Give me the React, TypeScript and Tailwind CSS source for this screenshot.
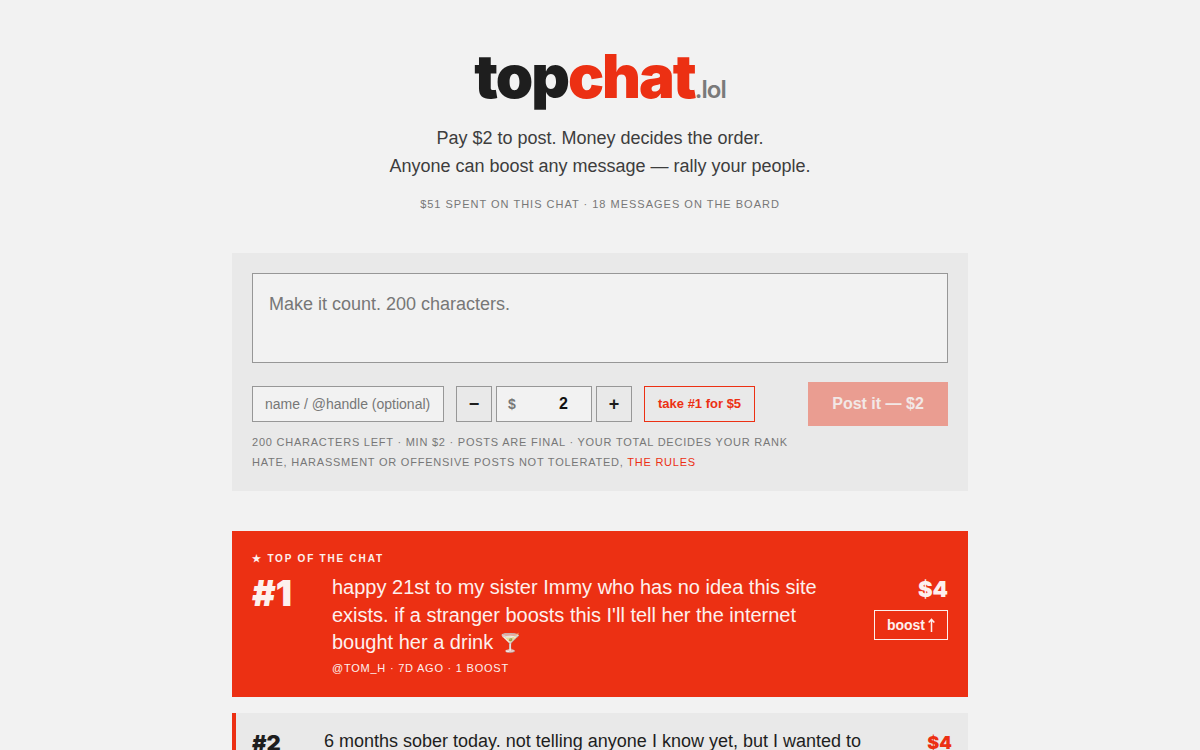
import React, { useState } from 'react';

type Message = {
  rank: number;
  text: string;
  amount: number;
};

const label = 'text-[11px] leading-5 uppercase';
const stepButton =
  'flex size-9 items-center justify-center border border-[#979797] text-lg font-bold text-[#1e1e1e]';

function Header() {
  return (
    <header className="flex flex-col items-center text-center">
      <h1 className="font-['Inter'] text-[60px] leading-[60px] font-black tracking-[-2px] text-[#1e1e1e]">
        top<span className="text-[#ec3013]">chat</span>
        <span className="text-2xl font-semibold tracking-[-1px] text-[#7a7a7a]">.lol</span>
      </h1>
      <p className="mt-[18px] text-lg leading-7 text-[#3d3d3d]">
        Pay $2 to post. Money decides the order.
        <br />
        Anyone can boost any message — rally your people.
      </p>
      <p className={`${label} mt-3.5 tracking-[1px] text-[#777777]`}>
        $51 spent on this chat · 18 messages on the board
      </p>
    </header>
  );
}

function Composer() {
  const [text, setText] = useState('');
  const [amount, setAmount] = useState(2);
  return (
    <form className="bg-[#e9e9e9] px-5 pt-5 pb-[19px]" onSubmit={(e) => e.preventDefault()}>
      <textarea
        aria-label="Message"
        maxLength={200}
        value={text}
        onChange={(e) => setText(e.target.value)}
        placeholder="Make it count. 200 characters."
        className="block h-[90px] w-full resize-none border border-[#979797] bg-[#f2f2f2] px-4 py-4 text-lg leading-7 outline-none placeholder:text-[#777777]"
      />
      <div className="mt-[19px] flex flex-wrap items-center gap-3">
        <input
          type="text"
          aria-label="Name"
          placeholder="name / @handle (optional)"
          className="h-9 w-48 border border-[#979797] bg-[#f2f2f2] px-3 text-sm outline-none placeholder:text-[#777777]"
        />
        <div className="flex gap-1">
          <button
            type="button"
            aria-label="Decrease"
            className={stepButton}
            onClick={() => setAmount(Math.max(2, amount - 1))}
          >
            −
          </button>
          <div className="flex h-9 w-24 items-center border border-[#979797] bg-[#f2f2f2] pr-[23px] pl-[11px]">
            <span className="text-sm font-bold text-[#777777]">$</span>
            <input
              type="text"
              inputMode="numeric"
              aria-label="Amount"
              value={amount}
              onChange={(e) => setAmount(Number(e.target.value) || 0)}
              className="w-full min-w-0 bg-transparent text-right text-base font-bold text-[#111111] outline-none"
            />
          </div>
          <button
            type="button"
            aria-label="Increase"
            className={stepButton}
            onClick={() => setAmount(amount + 1)}
          >
            +
          </button>
        </div>
        <button
          type="button"
          onClick={() => setAmount(5)}
          className="h-9 border border-[#ec3013] px-[13px] text-[13px] font-bold text-[#ec3013]"
        >
          take #1 for $5
        </button>
        <button
          type="submit"
          className="ml-auto h-11 w-[140px] bg-[#ea9d91] text-base font-extrabold text-[#f2e8e6]"
        >
          Post it — ${amount}
        </button>
      </div>
      <p className={`${label} mt-1.5 tracking-[0.07em] text-[#777777]`}>
        {200 - text.length} characters left · min $2 · posts are final · your total decides your rank
      </p>
      <p className={`${label} tracking-[0.07em] text-[#777777]`}>
        Hate, harassment or offensive posts not tolerated,{' '}
        <a href="#rules" className="text-[#ec3013]">
          the rules
        </a>
      </p>
    </form>
  );
}

function TopMessage() {
  return (
    <article className="bg-[#ec3013] px-5 pt-5 pb-[19px] text-[#fdf0ee]">
      <p className="text-[10px] leading-4 font-bold tracking-[0.18em] uppercase">
        ★ Top of the chat
      </p>
      <div className="mt-[7px] flex">
        <p className="w-20 shrink-0 pt-px font-['Inter'] text-[36px] leading-9 font-black">#1</p>
        <div className="min-w-0 flex-1">
          <p className="max-w-[500px] text-xl leading-snug">
            happy 21st to my sister Immy who has no idea this site exists. if a stranger boosts this
            I'll tell her the internet bought her a drink{' '}
            <span className="text-lg leading-none">🍸</span>
          </p>
          <p className={`${label} mt-px tracking-[0.07em]`}>@tom_h · 7d ago · 1 boost</p>
        </div>
        <div className="flex shrink-0 flex-col items-end gap-1.5 pt-px">
          <p className="font-['Inter'] text-[22px] leading-[29px] font-black">$4</p>
          <button
            type="button"
            className="flex h-[30px] items-center gap-[3px] border border-[#fdf0ee] px-3 text-sm font-bold"
          >
            boost
            <svg
              aria-hidden="true"
              width="7"
              height="14"
              viewBox="0 0 7 14"
              fill="none"
              stroke="currentColor"
              strokeWidth="1.5"
            >
              <path d="M3.5 14V1.5M0.7 4.6L3.5 1.3L6.3 4.6" />
            </svg>
          </button>
        </div>
      </div>
    </article>
  );
}

function MessageRow({ rank, text, amount }: Message) {
  return (
    <article className="flex border-l-4 border-[#ec3013] bg-[#e9e9e9] p-4 text-[#1e1e1e]">
      <p className="w-[72px] shrink-0 font-['Inter'] text-[22px] leading-7 font-black">#{rank}</p>
      <p className="min-w-0 flex-1 text-lg leading-6">{text}</p>
      <p className="font-['Inter'] text-lg leading-7 font-black text-[#ec3013]">${amount}</p>
    </article>
  );
}

export default function App() {
  return (
    <div className="min-h-screen bg-[#f2f2f2] font-['Liberation_Sans',Arial,sans-serif]">
      <main className="mx-auto flex max-w-3xl flex-col px-4 pt-[46px]">
        <Header />
        <div className="mt-[39px]">
          <Composer />
        </div>
        <section aria-label="Messages" className="mt-10 flex flex-col gap-4">
          <TopMessage />
          <MessageRow
            rank={2}
            text="6 months sober today. not telling anyone I know yet, but I wanted to"
            amount={4}
          />
        </section>
      </main>
    </div>
  );
}
